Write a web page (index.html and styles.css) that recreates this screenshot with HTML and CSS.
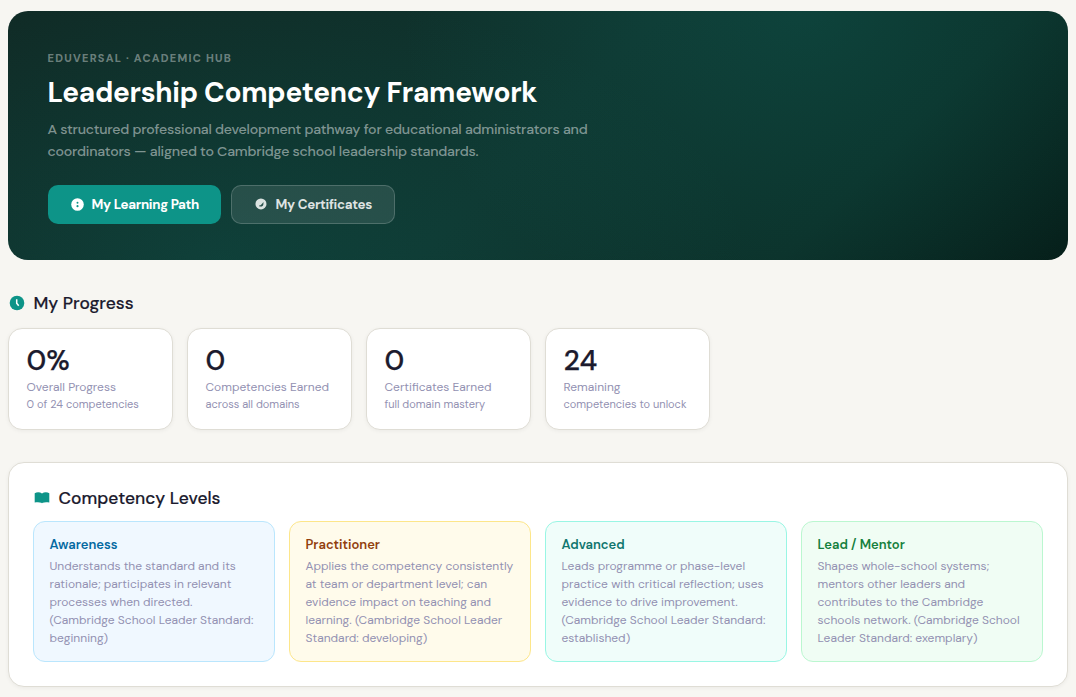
FILE: index.html
```
<!DOCTYPE html>
<html lang="en">
<head>
  <meta charset="UTF-8">
  <meta name="viewport" content="width=device-width, initial-scale=1.0">
  <title>Leadership Competency Framework</title>
  <link rel="stylesheet" href="styles.css">
</head>
<body>

  <header class="hero">
    <div class="hero-eyebrow">Eduversal · Academic Hub</div>
    <h1>Leadership Competency Framework</h1>
    <p class="hero-text">A structured professional development pathway for educational administrators and<br>coordinators — aligned to Cambridge school leadership standards.</p>
    <div class="hero-actions">
      <a class="btn btn-primary">
        <svg class="btn-icon" viewBox="0 0 12 12"><circle cx="6" cy="6" r="5.8" fill="#fff"/><circle cx="6" cy="4.3" r=".9" fill="#0d9488"/><circle cx="6" cy="7.5" r="1" fill="#0d9488"/></svg>
        <span>My Learning Path</span>
      </a>
      <a class="btn btn-ghost">
        <svg class="btn-icon" viewBox="0 0 12 12"><circle cx="5.5" cy="5.5" r="5.1" fill="#dbe3e1"/><path d="M7.8 3.6v1.6C7.8 7 6.6 7.8 5 7.8H4V6.6h1.2L6.5 5.3z" fill="#28504b"/></svg>
        <span>My Certificates</span>
      </a>
    </div>
  </header>

  <section class="progress">
    <h2 class="section-title">
      <svg class="title-icon" viewBox="0 0 18 18"><circle cx="9" cy="9" r="7.3" fill="#0d9488"/><path d="M8.7 5.3v4l2 2.5" fill="none" stroke="#fff" stroke-width="1.5"/></svg>
      <span>My Progress</span>
    </h2>
    <div class="stats">
      <div class="stat">
        <div class="stat-value">0%</div>
        <div class="stat-label">Overall Progress</div>
        <div class="stat-sub">0 of 24 competencies</div>
      </div>
      <div class="stat">
        <div class="stat-value">0</div>
        <div class="stat-label">Competencies Earned</div>
        <div class="stat-sub">across all domains</div>
      </div>
      <div class="stat">
        <div class="stat-value">0</div>
        <div class="stat-label">Certificates Earned</div>
        <div class="stat-sub">full domain mastery</div>
      </div>
      <div class="stat">
        <div class="stat-value">24</div>
        <div class="stat-label">Remaining</div>
        <div class="stat-sub">competencies to unlock</div>
      </div>
    </div>
  </section>

  <section class="levels">
    <h2 class="section-title">
      <svg class="title-icon" viewBox="0 0 18 18"><path d="M1.7 4.2C4 2.9 7 3.1 9 4.4c2-1.3 5-1.5 7.3-.2v9.4c-2.4-.7-5-.5-6.6.1L9 14.3l-.7-.6c-1.6-.6-4.2-.8-6.6-.1z" fill="#0d9488"/></svg>
      <span>Competency Levels</span>
    </h2>
    <div class="level-grid">
      <div class="level awareness">
        <h3>Awareness</h3>
        <p>Understands the standard and its<br>rationale; participates in relevant<br>processes when directed.<br>(Cambridge School Leader Standard:<br>beginning)</p>
      </div>
      <div class="level practitioner">
        <h3>Practitioner</h3>
        <p>Applies the competency consistently<br>at team or department level; can<br>evidence impact on teaching and<br>learning. (Cambridge School Leader<br>Standard: developing)</p>
      </div>
      <div class="level advanced">
        <h3>Advanced</h3>
        <p>Leads programme or phase-level<br>practice with critical reflection; uses<br>evidence to drive improvement.<br>(Cambridge School Leader Standard:<br>established)</p>
      </div>
      <div class="level mentor">
        <h3>Lead / Mentor</h3>
        <p>Shapes whole-school systems;<br>mentors other leaders and<br>contributes to the Cambridge<br>schools network. (Cambridge School<br>Leader Standard: exemplary)</p>
      </div>
    </div>
  </section>

</body>
</html>
```
FILE: styles.css
```
* {
  box-sizing: border-box;
}

body {
  margin: 0;
  padding: 11px 8px 0;
  height: 697px;
  overflow: hidden;
  background: #f7f6f2;
  color: #1c1b2e;
  font-family: "DM Sans", Inter, sans-serif;
}

h1, h2, h3, p {
  margin: 0;
}

.hero {
  height: 249px;
  padding: 39px 40px 0 39.5px;
  border-radius: 20px;
  background:
    radial-gradient(ellipse 38% 130% at 75% 0%, rgba(13, 148, 136, 0.17) 0%, transparent 100%),
    radial-gradient(ellipse 50% 110% at 20% 100%, rgba(13, 148, 136, 0.15) 0%, transparent 100%),
    linear-gradient(135deg, #102b26 0%, #0f342e 50%, #0c3029 78%, #061f1a 100%);
}

.hero-eyebrow {
  line-height: 16px;
  font-size: 11px;
  font-weight: 700;
  letter-spacing: 1.25px;
  text-transform: uppercase;
  color: rgba(255, 255, 255, 0.4);
}

.hero h1 {
  margin-top: 9px;
  line-height: 36px;
  font-size: 28px;
  font-weight: 700;
  letter-spacing: -0.28px;
  color: #fff;
  white-space: nowrap;
}

.hero-text {
  margin-top: 7px;
  font-size: 14.2px;
  font-weight: 500;
  line-height: 22px;
  letter-spacing: -0.225px;
  color: rgba(255, 255, 255, 0.48);
  white-space: nowrap;
}

.hero-actions {
  display: flex;
  gap: 10px;
  margin-top: 23px;
}

.btn {
  display: flex;
  align-items: center;
  width: 173px;
  height: 39px;
  margin-left: 0.5px;
  padding-left: 23px;
  border-radius: 10px;
  font-size: 13.4px;
  font-weight: 700;
  letter-spacing: -0.32px;
  white-space: nowrap;
}

.btn-primary {
  background: #0d9488;
  color: #fff;
}

.btn-ghost {
  width: 164px;
  margin-left: 0;
  background: rgba(255, 255, 255, 0.1);
  border: 1px solid rgba(255, 255, 255, 0.18);
  color: rgba(255, 255, 255, 0.85);
}

.btn-icon {
  width: 13px;
  height: 13px;
  margin-right: 7.5px;
}

.section-title {
  display: flex;
  align-items: center;
  gap: 7.5px;
  height: 24px;
  font-size: 17.4px;
  font-weight: 500;
  -webkit-text-stroke: 0.15px;
  white-space: nowrap;
}

.title-icon {
  width: 18px;
  height: 18px;
}

.progress {
  margin-top: 31px;
}

.stats {
  display: grid;
  grid-template-columns: repeat(4, 165px);
  gap: 14px;
  margin-top: 13px;
}

.stat {
  height: 102px;
  padding: 15px 17.5px;
  background: #fff;
  border: 1px solid #dfddd5;
  border-radius: 14px;
  box-shadow: 0 1px 4px rgba(0, 0, 0, 0.05);
  color: #9391b2;
  white-space: nowrap;
}

.stat-value {
  line-height: 33px;
  font-size: 28.6px;
  font-weight: 500;
  -webkit-text-stroke: 0.25px;
  color: #1c1b2e;
}

.stat-label {
  margin-top: 1px;
  font-size: 12px;
  line-height: 18px;
}

.stat-sub {
  font-size: 11px;
  line-height: 17px;
}

.levels {
  height: 225px;
  margin-top: 32px;
  padding: 23px 24px;
  background: #fff;
  border: 1px solid #dfddd5;
  border-radius: 16px;
  box-shadow: 0 1px 4px rgba(0, 0, 0, 0.05);
}

.level-grid {
  display: grid;
  grid-template-columns: repeat(4, 1fr);
  gap: 14px;
  margin-top: 11px;
}

.level {
  height: 141px;
  padding: 14px 15.5px;
  border: 1px solid;
  border-radius: 12px;
  white-space: nowrap;
}

.level h3 {
  font-size: 13px;
  font-weight: 600;
  line-height: 18px;
}

.level p {
  margin-top: 3px;
  font-size: 12px;
  line-height: 18px;
  color: #9391b2;
}

.awareness {
  background: #f0f8ff;
  border-color: #bae6fd;
}

.awareness h3 {
  color: #0369a1;
}

.practitioner {
  background: #fffbeb;
  border-color: #fde68a;
}

.practitioner h3 {
  color: #92400e;
}

.advanced {
  background: #f0fdfa;
  border-color: #99f6e4;
}

.advanced h3 {
  color: #0f766e;
}

.mentor {
  background: #f0fdf4;
  border-color: #bbf7d0;
}

.mentor h3 {
  color: #15803d;
}
```
